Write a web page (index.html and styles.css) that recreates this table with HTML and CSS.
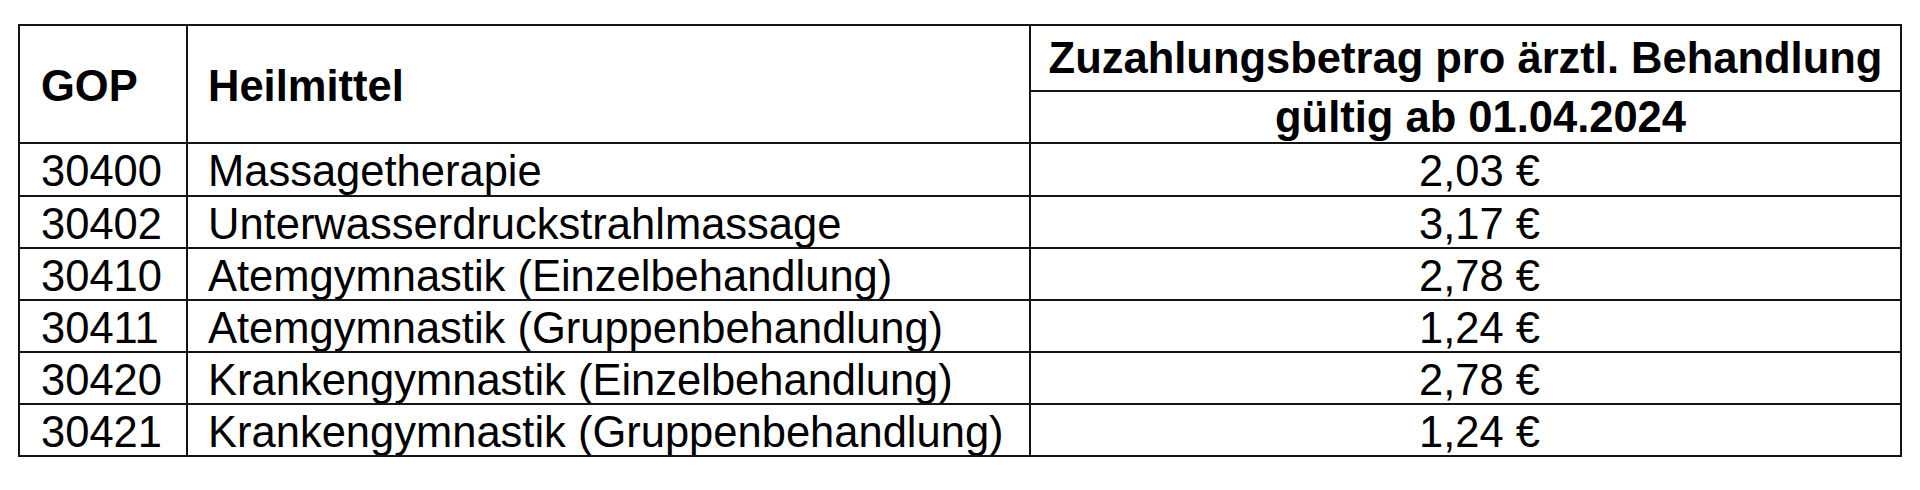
FILE: index.html
```html
<!DOCTYPE html>
<html lang="de">
<head>
<meta charset="utf-8">
<title>Zuzahlungsbeträge Heilmittel</title>
<link rel="stylesheet" href="styles.css">
</head>
<body>
<table class="tbl">
  <thead>
    <tr class="h1">
      <th class="c1 gop" rowspan="2">GOP</th>
      <th class="c2 gop" rowspan="2">Heilmittel</th>
      <th class="c3 top">Zuzahlungsbetrag pro ärztl. Behandlung</th>
    </tr>
    <tr class="h2">
      <th class="c3 sub">gültig ab 01.04.2024</th>
    </tr>
  </thead>
  <tbody>
    <tr class="r first"><td class="c1">30400</td><td class="c2">Massagetherapie</td><td class="c3 val">2,03 €</td></tr>
    <tr class="r"><td class="c1">30402</td><td class="c2">Unterwasserdruckstrahlmassage</td><td class="c3 val">3,17 €</td></tr>
    <tr class="r"><td class="c1">30410</td><td class="c2">Atemgymnastik (Einzelbehandlung)</td><td class="c3 val">2,78 €</td></tr>
    <tr class="r"><td class="c1">30411</td><td class="c2">Atemgymnastik (Gruppenbehandlung)</td><td class="c3 val">1,24 €</td></tr>
    <tr class="r"><td class="c1">30420</td><td class="c2">Krankengymnastik (Einzelbehandlung)</td><td class="c3 val">2,78 €</td></tr>
    <tr class="r"><td class="c1">30421</td><td class="c2">Krankengymnastik (Gruppenbehandlung)</td><td class="c3 val">1,24 €</td></tr>
  </tbody>
</table>
</body>
</html>
```
FILE: styles.css
```css
html, body {
  margin: 0;
  padding: 0;
  background: #ffffff;
}
body {
  font-family: "Liberation Sans", Arial, sans-serif;
  color: #000000;
}
.tbl {
  margin: 24px 0 0 18px;
  border-collapse: separate;
  border-spacing: 0;
  border-top: 2px solid #151515;
  border-left: 2px solid #151515;
  table-layout: fixed;
  width: 1884px;
  font-size: 43.5px;
  line-height: 46px;
}
.tbl th, .tbl td {
  box-sizing: border-box;
  border-right: 2px solid #151515;
  border-bottom: 2px solid #151515;
  padding: 0;
  vertical-align: top;
  white-space: nowrap;
  overflow: hidden;
}
.tbl th {
  font-weight: bold;
}
.c1 {
  width: 168px;
  text-align: left;
  padding-left: 21px !important;
}
.c2 {
  width: 843px;
  text-align: left;
  padding-left: 20px !important;
}
.c3 {
  width: 871px;
  text-align: center;
}
.gop {
  padding-top: 37px !important;
}
.h1 .top {
  height: 66px;
  padding-top: 9px !important;
}
.h2 .sub {
  height: 52px;
  padding-top: 2px !important;
  padding-left: 30px !important;
}
.r td {
  height: 52px;
  padding-top: 4px !important;
}
.r.first td {
  height: 53px;
}
.val {
  padding-left: 28px !important;
}
```
